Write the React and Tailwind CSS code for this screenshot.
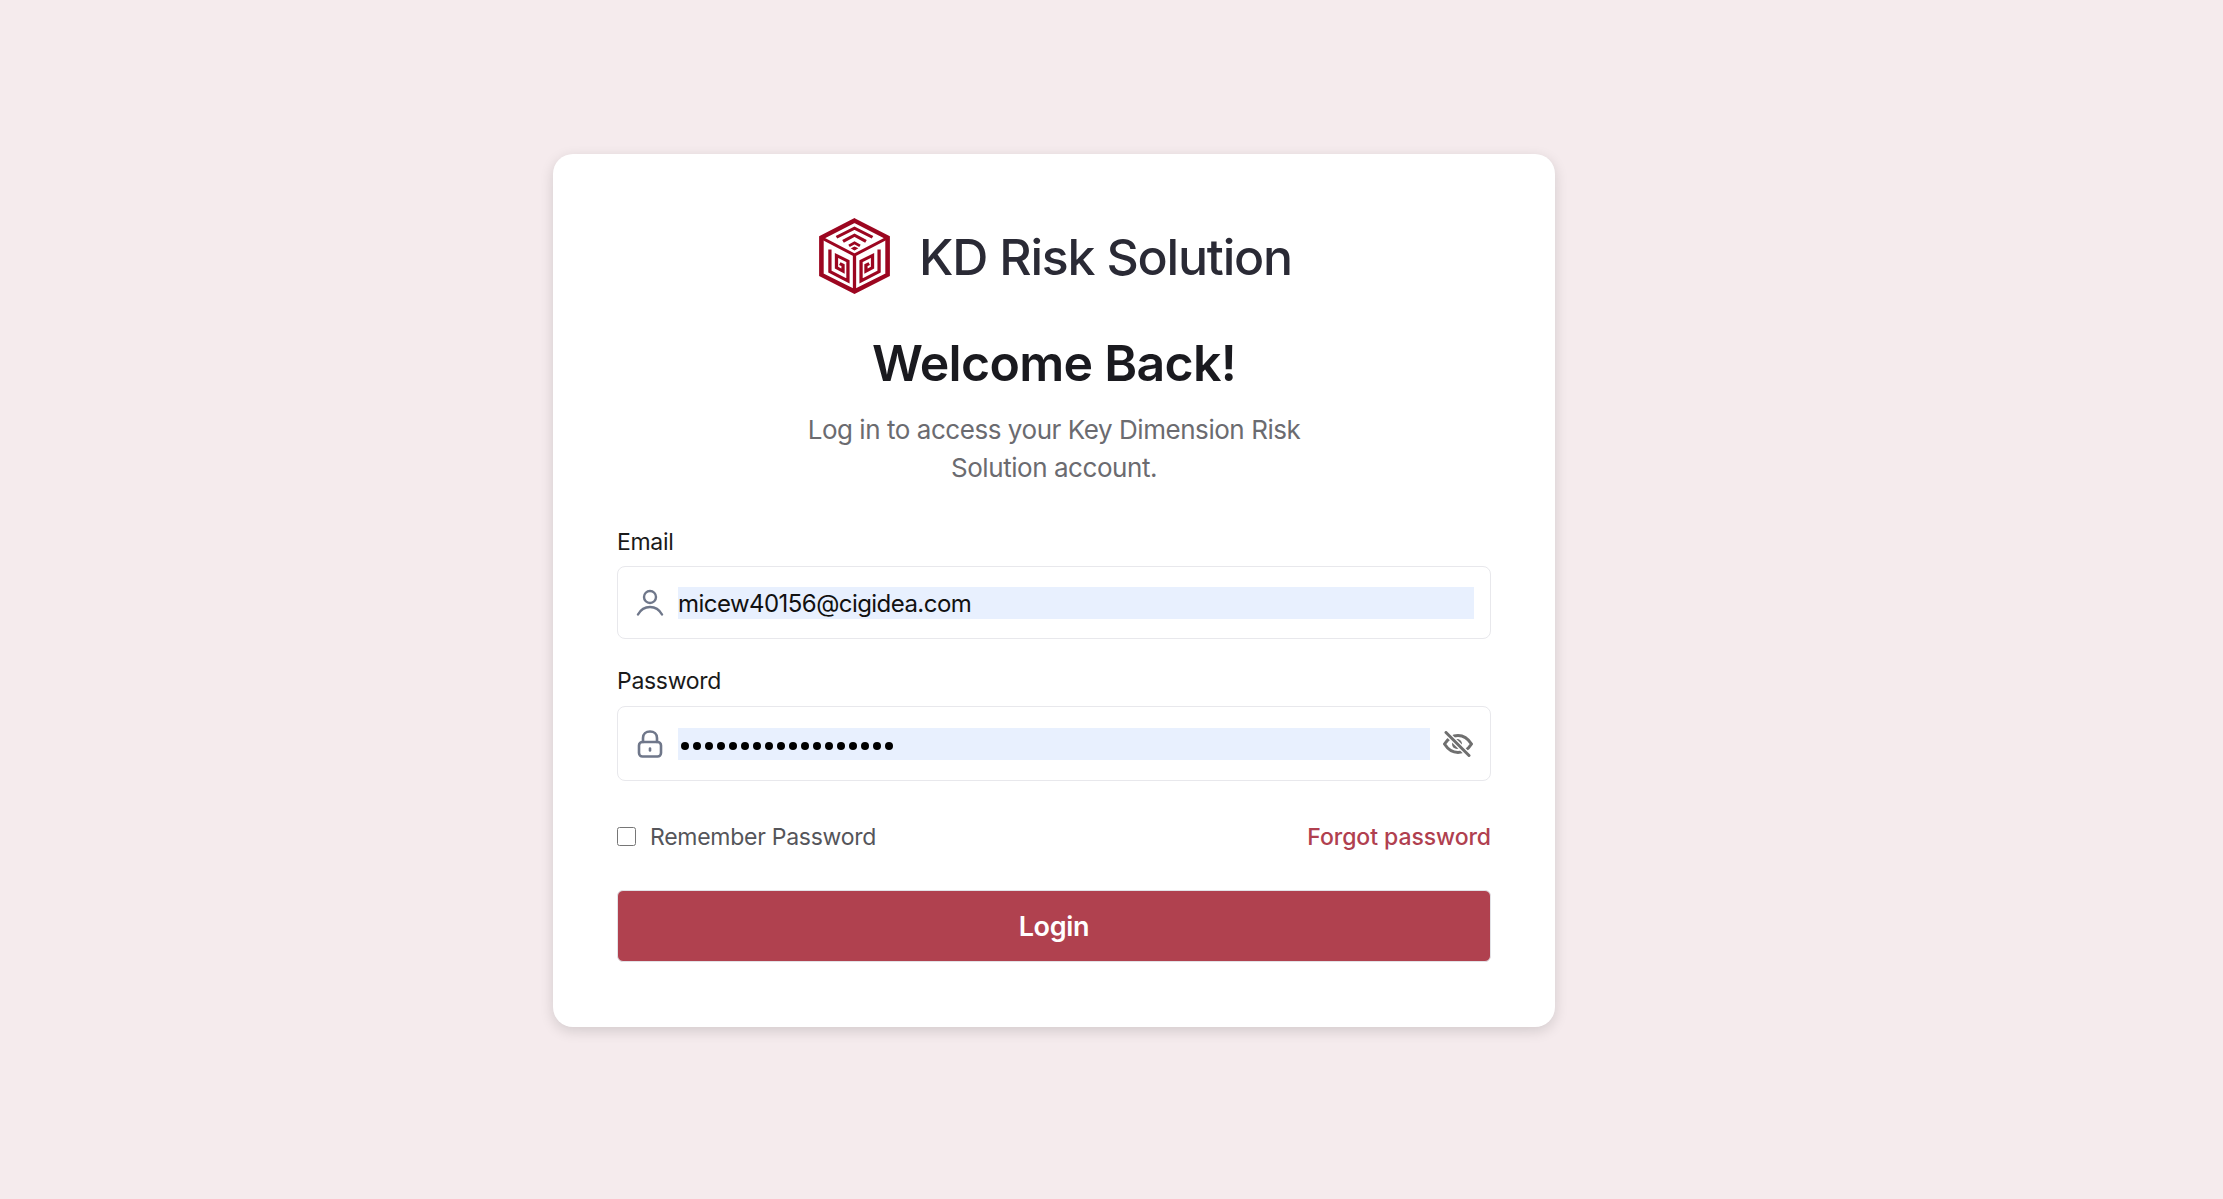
import { useState } from 'react';

const font = "font-['Inter','Noto_Sans',sans-serif]";

const Logo = () => (
  <svg width="71" height="76" viewBox="0 0 65 75" preserveAspectRatio="none" fill="none" stroke="#9c0620" strokeLinejoin="miter" className="shrink-0">
    {/* outer hexagon */}
    <path d="M32.5 2.5 L62.8 19.3 V56 L32.5 72.5 L2.2 56 V19.3 Z" strokeWidth="4.2" />
    {/* top chevrons */}
    <path d="M16 19 L32.5 10 L49 19" strokeWidth="3" />
    <path d="M22 23 L32.5 17 L43 23" strokeWidth="3" />
    <path d="M27.5 27.5 L32.5 24.5 L37.5 27.5" strokeWidth="2.6" />
    <path d="M30 30 L32.5 28.8 L35 30 L32.5 31.5 Z" strokeWidth="1" fill="#9c0620" />
    {/* center Y */}
    <path d="M3 20 L32.5 36.5 L62 20 M32.5 36.5 V72" strokeWidth="3" />
    {/* left spiral */}
    <path d="M10 31 V53 L26.5 62 V42.5 L16 37 V49 L22 52.5 V46.5 L19 45" strokeWidth="3" />
    {/* right spiral */}
    <path d="M55 31 V53 L38.5 62 V42.5 L49 37 V49 L43 52.5 V46.5 L46 45" strokeWidth="3" />
  </svg>
);

const UserIcon = () => (
  <svg width="28" height="27" viewBox="0 0 28 27" fill="none" stroke="#6f778a" strokeWidth="2.4" strokeLinecap="round" className="shrink-0">
    <circle cx="14" cy="8" r="6" />
    <path d="M2 25.5 C5 20 9.5 18 14 18 C18.5 18 23 20 26 25.5" />
  </svg>
);

const LockIcon = () => (
  <svg width="26" height="28" viewBox="0 0 26 28" fill="none" stroke="#6f778a" strokeWidth="2.6" strokeLinecap="round" className="shrink-0">
    <rect x="2" y="12" width="22" height="14.5" rx="3.5" />
    <path d="M6 12 V8 C6 4 9 1.5 13 1.5 C17 1.5 20 4 20 8 V12" />
    <path d="M13 18.5 V20.5" />
  </svg>
);

const EyeSlashIcon = () => (
  <svg width="30" height="26" viewBox="0 0 30 26" fill="none" stroke="#6f6f6f" strokeLinecap="round" strokeLinejoin="round" className="shrink-0">
    <path d="M1.5 13 C6 6 10 4.5 15 4.5 C20 4.5 24 6 28.5 13 C24 20 20 21.5 15 21.5 C10 21.5 6 20 1.5 13 Z" strokeWidth="3" />
    <circle cx="14" cy="13" r="5" fill="#6f6f6f" strokeWidth="0" />
    <path d="M3 1.5 L26 24.5" stroke="#fff" strokeWidth="5.5" />
    <path d="M3 1.5 L26 24.5" strokeWidth="3" />
  </svg>
);

const App = () => {
  const [remember, setRemember] = useState(false);

  return (
    <div className={`min-h-screen bg-[#f5ebed] pl-[553px] pt-[154px] ${font}`}>
      <div className="w-[1002px] h-[873px] bg-white rounded-[20px] shadow-[0_4px_14px_rgba(0,0,0,0.14)] px-16 pt-[62px]">
        {/* Brand */}
        <div className="flex items-center justify-center gap-[29px] h-[80px] pl-[3px]">
          <Logo />
          <span className="pt-[2px] text-[50px] font-medium tracking-[-1.2px] text-[#2a2a35] leading-none">KD Risk Solution</span>
        </div>

        <h1 className="mt-[37px] text-center text-[50px] leading-[60px] font-semibold tracking-[-0.7px] text-[#1a1a1f]">Welcome Back!</h1>
        <p className="mt-[18px] mx-auto w-[520px] text-center text-[26px] leading-[38px] tracking-[-0.45px] text-[#6b6b70]">
          Log in to access your Key Dimension Risk Solution account.
        </p>

        {/* Email */}
        <label className="block mt-[39px] text-[23px] leading-[32px] tracking-[-0.3px] text-[#1a1a1a]">Email</label>
        <div className="mt-[8px] h-[73px] border-[1.5px] border-[#e8e8ec] rounded-[8px] flex items-center pl-[18px] pr-[16px]">
          <UserIcon />
          <div className="ml-[14px] flex-1 h-[32px] bg-[#e8f0fe] flex items-center pt-[2px] text-[24px] tracking-[-0.55px] text-[#111] leading-none">micew40156@cigidea.com</div>
        </div>

        {/* Password */}
        <label className="block mt-[26px] text-[23px] leading-[32px] tracking-[-0.3px] text-[#1a1a1a]">Password</label>
        <div className="mt-[9px] h-[75px] border-[1.5px] border-[#e8e8ec] rounded-[8px] flex items-center pl-[19px] pr-[17px]">
          <LockIcon />
          <div className="ml-[15px] flex-1 h-[32px] bg-[#e8f0fe] flex items-center pl-[3px] pt-[5px] gap-[4px]">
            {Array.from({ length: 18 }).map((_, i) => (
              <span key={i} className="w-[8px] h-[8px] rounded-full bg-black" />
            ))}
          </div>
          <div className="ml-[13px]"><EyeSlashIcon /></div>
        </div>

        {/* Options */}
        <div className="mt-[41px] flex items-center justify-between h-[30px]">
          <label className="flex items-center gap-[14px] text-[23px] tracking-[-0.27px] text-[#55555a]">
            <input
              type="checkbox"
              checked={remember}
              onChange={(e) => setRemember(e.target.checked)}
              className="w-[19px] h-[19px] m-0 -translate-y-[1px]"
            />
            Remember Password
          </label>
          <a href="#" className="text-[23px] font-medium tracking-[-0.07px] text-[#b0404f]">Forgot password</a>
        </div>

        <button className="mt-[38px] w-full h-[72px] pt-[2px] bg-[#b0414f] border border-[#e2e2e6] rounded-[6px] text-white text-[27px] font-semibold tracking-[-0.3px]">
          Login
        </button>
      </div>
    </div>
  );
};

export default App;
